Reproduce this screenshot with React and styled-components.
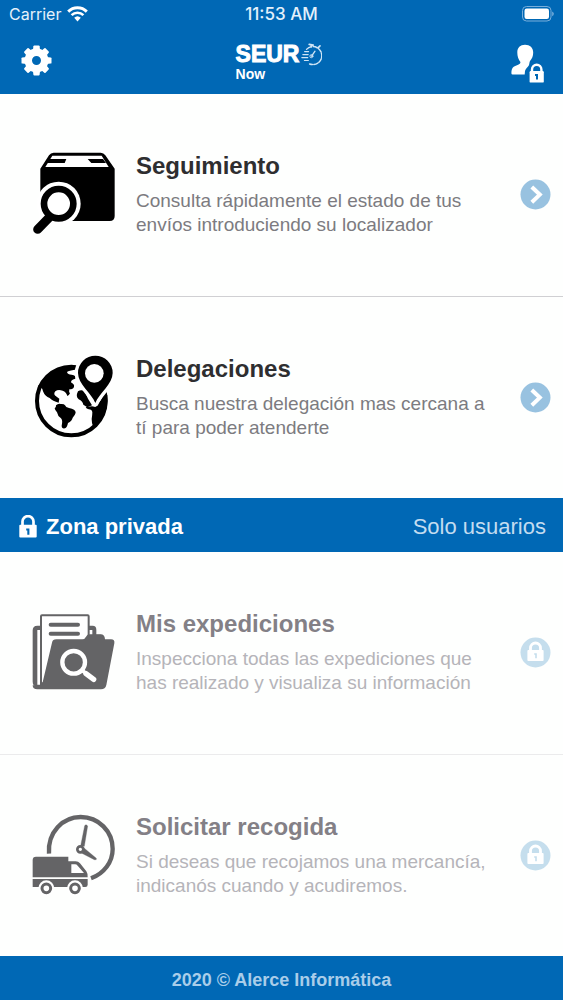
import styled, { createGlobalStyle } from "styled-components";

const GlobalStyle = createGlobalStyle`
  * {
    box-sizing: border-box;
  }

  body {
    margin: 0;
    background: #fefffe;
    font-family: "Liberation Sans", Arial, sans-serif;
  }
`;

const Screen = styled.div`
  display: flex;
  flex-direction: column;
  min-height: 100vh;
`;

const Header = styled.header`
  background: #0068b5;
  color: #fff;
`;

const StatusBar = styled.div`
  display: grid;
  grid-template-columns: 1fr auto 1fr;
  align-items: center;
  height: 28px;
  padding: 0 9px;
  font-family: Inter, sans-serif;
  font-size: 16px;
`;

const Carrier = styled.div`
  display: flex;
  align-items: center;
  gap: 6px;
  color: #e4f1fb;
`;

const Clock = styled.div`
  font-size: 17px;
  font-weight: 500;
  color: #e4f1fb;
`;

const BatteryIcon = styled.svg`
  justify-self: end;
`;

const NavBar = styled.div`
  display: grid;
  grid-template-columns: 1fr auto 1fr;
  align-items: center;
  height: 66px;
  padding: 0 18px 2px 21px;
`;

const IconButton = styled.button`
  display: flex;
  justify-self: ${({ $align }) => $align};
  padding: 0;
  border: 0;
  background: none;
  color: inherit;
  cursor: pointer;
`;

const Brand = styled.div`
  display: grid;
  grid-template-columns: auto auto;
  column-gap: 2px;
  align-items: center;
  padding: 4px 8px 0 0;
`;

const BrandName = styled.span`
  font-size: 23px;
  font-weight: 700;
  line-height: 20px;
  -webkit-text-stroke: 1px #fff;
`;

const BrandSub = styled.span`
  grid-column: 1 / -1;
  font-size: 14px;
  font-weight: 700;
  line-height: 16px;
`;

const MenuItem = styled.a`
  display: flex;
  flex: 1;
  align-items: center;
  padding: 0 12px 0 31px;
  border: 0 solid ${({ $locked }) => ($locked ? "#ebebec" : "#d0d0d3")};
  color: #2e2e30;
  text-decoration: none;

  & + & {
    border-top-width: 1px;
  }
`;

const Picture = styled.svg`
  flex: none;
  width: 85px;
  height: 85px;
  margin-right: 20px;
  color: ${({ $locked }) => ($locked ? "#646466" : "#000")};
`;

const ItemText = styled.div`
  flex: 1;
  margin-right: 28px;
`;

const ItemTitle = styled.h2`
  margin: 0 0 9px;
  font-size: 24px;
  line-height: 28px;
  color: ${({ $locked }) => ($locked ? "#838086" : "#2e2e30")};
`;

const ItemInfo = styled.p`
  margin: 0;
  font-size: 19px;
  line-height: 24px;
  color: ${({ $locked }) => ($locked ? "#b5b4b9" : "#7c7b80")};
`;

const Badge = styled.svg`
  flex: none;
  width: 31px;
  height: 31px;
`;

const ZoneBar = styled.div`
  display: flex;
  align-items: center;
  height: 54px;
  padding: 3px 17px 0 19px;
  background: #0068b5;
  color: #fff;
  font-size: 22px;
`;

const ZoneTitle = styled.h1`
  flex: 1;
  margin: 0 0 0 9px;
  font-size: inherit;
`;

const ZoneNote = styled.span`
  color: #c3dcf0;
`;

const Footer = styled.footer`
  height: 44px;
  padding-top: 4px;
  background: #0068b5;
  color: #a9cde9;
  font-size: 18px;
  font-weight: 700;
  line-height: 40px;
  text-align: center;
`;

function WifiIcon() {
  return (
    <svg width="21" height="16" viewBox="0 0 21 16" fill="none" stroke="#fff">
      <path d="M1.2 5.6a13.2 13.2 0 0 1 18.6 0" strokeWidth="2.9" />
      <path d="M4.6 9.1a8.4 8.4 0 0 1 11.8 0" strokeWidth="2.6" />
      <path d="M7.2 11.8a4.8 4.8 0 0 1 6.6 0l-3.3 3.6z" fill="#fff" stroke="none" />
    </svg>
  );
}

function Battery() {
  return (
    <BatteryIcon width="33" height="16" viewBox="0 0 33 16">
      <rect x="1.5" y="0.5" width="28.5" height="14.5" rx="4" fill="none" stroke="#78aedb" />
      <rect x="3.5" y="2.5" width="24.5" height="10.5" rx="2.2" fill="#fff" />
      <path d="M31.2 5.4q1.6 .7 1.6 2.4t-1.6 2.4z" fill="#78aedb" />
    </BatteryIcon>
  );
}

function GearIcon() {
  const teeth = [0, 45, 90, 135, 180, 225, 270, 315];
  return (
    <svg width="31" height="31" viewBox="0 0 31 31">
      <g fill="#fff">
        {teeth.map((angle) => (
          <path
            key={angle}
            d="M11.9 5.5l.5-4.2q.1-.8.9-.8h4.4q.8 0 .9.8l.5 4.2z"
            transform={`rotate(${angle} 15.5 15.5)`}
          />
        ))}
      </g>
      <circle cx="15.5" cy="15.5" r="8.2" fill="none" stroke="#fff" strokeWidth="7.4" />
    </svg>
  );
}

function StopwatchIcon() {
  return (
    <svg width="21" height="23" viewBox="0 0 21 23" fill="none" stroke="#cfe5f6" strokeLinecap="round">
      <path d="M5.5 6.4A9 9 0 0 1 10.5 3.6" strokeWidth="1.3" />
      <path d="M12.2 3.6A9 9 0 1 1 8.6 21" strokeWidth="1.5" strokeDasharray="4.2 1.4" />
      <path d="M8.2 1.3l4 .8M10.2 1.8v2M17.2 4.6l1.8-1.8" strokeWidth="1.7" />
      <path d="M3.6 8.6h4M1.8 11.6h5.4M.8 14.6h6M3.4 17.5h4" strokeWidth="1.1" />
      <path d="M10.6 13.2L14 8.2" strokeWidth="1.3" />
      <circle cx="10.4" cy="13.2" r="1.5" strokeWidth="1" />
    </svg>
  );
}

function UserLockIcon() {
  return (
    <svg width="34" height="47" viewBox="0 -7 34 47" fill="none">
      <path
        d="M14 .8c5 0 8.2 3 8.2 7.8 0 3.5-1.2 6.1-3 8.2-1 1.2-.6 3-1.4 4.6-1 1.7-3.3 3.3-3.8 5.6l-.3 3.6H1.6q-1.2 0-1.2-1.4c0-5.6 2.2-6.9 5.6-8 2.6-.9 3.6-1.7 3.4-3.2C7.4 15.5 6.3 12.6 6.3 8.6 6.3 3.8 9.2.8 14 .8z"
        fill="#fff"
      />
      <path d="M21 28v-2.6a4.7 4.7 0 0 1 9.4 0V28" stroke="#fff" strokeWidth="2.4" />
      <rect x="18.6" y="27" width="14.2" height="11.6" rx="1.2" fill="#fff" />
      <path d="M24 30h3v5.6h-2v-3.6h-1z" fill="#0068b5" />
    </svg>
  );
}

function LockIcon() {
  return (
    <svg width="18" height="23" viewBox="0 0 18 23" fill="none">
      <path d="M3.5 11V6.6a5.5 5.5 0 0 1 11 0V11" stroke="#fff" strokeWidth="2.7" />
      <rect x="0.3" y="9.8" width="17.4" height="12.8" rx="1" fill="#fff" />
      <path d="M7.2 13.5h3.2v6.2H8.3v-4.3H7.2z" fill="#0068b5" />
    </svg>
  );
}

function ParcelPicture() {
  return (
    <Picture viewBox="33 36 255 255">
      <path
        d="M61 86L87 46q5-8 14-8h141q9 0 14 8l28 40v142q0 15-15 15H76q-15 0-15-15z"
        fill="currentColor"
      />
      <path d="M97 47h148l21 34H76z" fill="#fff" />
      <path d="M86 57h53l-5 12H80zM203 57h46l9 12h-44z" fill="currentColor" />
      <circle cx="116" cy="191" r="66" fill="#fff" />
      <path d="M56 192h60l40 51-4 14H56z" fill="#fff" />
      <circle cx="116" cy="191" r="44" fill="none" stroke="currentColor" strokeWidth="20" />
      <path d="M88 232L53 268" stroke="currentColor" strokeWidth="27" strokeLinecap="round" />
    </Picture>
  );
}

function GlobePicture() {
  return (
    <Picture viewBox="33 42 255 255">
      <circle cx="154" cy="180" r="103" fill="#fff" stroke="currentColor" strokeWidth="12" />
      <g fill="currentColor">
        <path d="M54 143C70 103 108 74 165 74v12q-18 2-24 7 2 8 14 8 14 2 11 12-16 4-12 12 10 4 8 12-2 8-14 8-2 8 2 12-4 8-8 8-3-12-14-16-14-5-22 2-8 10 4 16l8 6-2 12q-18-4-27-14-14-4-20-20-3-14-15-18z" />
        <path d="M108 193q6-6 14-4 10-1 13 4 3 8 12 8 20 4 20 14-2 8-9 15-2 10-14 16-3 14-9 16-10 2-10-8 4-16-2-22-10-6-12-18-6-6-7-12 5-3 4-9z" />
        <path d="M174 151q10-6 20 0l10 22 12 20-14 6-12-8q-2-10-14-16-10-8-2-24z" />
        <path d="M262 162c5 46-15 80-43 94q-4-10-4-22 2-12 2-20-1-9-11-9-7-1-9-7l19-2 10 2 16-20 7-14z" />
      </g>
      <path
        d="M226 186c-12-30-52-57-52-90a52 52 0 0 1 104 0c0 33-40 60-52 90z"
        fill="currentColor"
        stroke="#fff"
        strokeWidth="20"
        strokeLinejoin="round"
        paintOrder="stroke"
      />
      <circle cx="223" cy="97" r="28" fill="#fff" />
    </Picture>
  );
}

function FolderPicture() {
  return (
    <Picture viewBox="33 31 255 255" $locked>
      <path d="M38 92q0-14 14-14h166q11 0 11 12v15h12q10 0 12 14l-9 141H52q-14 0-14-14z" fill="currentColor" />
      <path d="M52 91h8v164h-8zM207 91h10v15l-10 4z" fill="#fff" />
      <path d="M63 250V50q0-3 3-3h137q3 0 3 3v82l-40 124z" fill="#fff" stroke="currentColor" strokeWidth="6" />
      <path d="M92 75h82M92 102h82" stroke="currentColor" strokeWidth="12" strokeLinecap="round" />
      <path
        d="M96 129q2-10 13-10h78q7 0 11-8t13-7h31q12 0 13 15h18q12 0 10 12l-24 125q-3 13-16 13H52q-14 0-14-12l28-1z"
        fill="currentColor"
      />
      <circle cx="161" cy="188" r="34" fill="none" stroke="#fff" strokeWidth="13" />
      <path d="M185 211l10 8" stroke="#fff" strokeWidth="11" />
      <path d="M198 222l23 17" stroke="#fff" strokeWidth="16" strokeLinecap="round" />
    </Picture>
  );
}

function TruckPicture() {
  return (
    <Picture viewBox="33 39 255 255" $locked>
      <path
        d="M87 161C82 96 129 51 182 51c54 0 96 43 96 96 0 39-26 74-65 88"
        fill="none"
        stroke="currentColor"
        strokeWidth="13"
      />
      <path d="M182 137l12-60q4-6 9 1l-10 61zM191 143l38 32q2 6-6 4l-39-20z" fill="currentColor" stroke="currentColor" strokeLinejoin="round" />
      <circle cx="181" cy="148" r="9" fill="#fff" stroke="currentColor" strokeWidth="8" />
      <path d="M38 180q0-10 10-10h97v14h22q8 0 13 6l19 24q4 5 4 18H38z" fill="currentColor" />
      <path d="M154 193h11q5 0 8 4l19 22h-38z" fill="#fff" />
      <path d="M38 237h165v17q0 7-7 7H38z" fill="currentColor" />
      <circle cx="79" cy="265" r="24" fill="#fff" />
      <circle cx="165" cy="265" r="24" fill="#fff" />
      <circle cx="79" cy="265" r="13" fill="none" stroke="currentColor" strokeWidth="9" />
      <circle cx="165" cy="265" r="13" fill="none" stroke="currentColor" strokeWidth="9" />
    </Picture>
  );
}

function ArrowBadge() {
  return (
    <Badge viewBox="0 0 31 31" fill="none">
      <circle cx="15.5" cy="15.5" r="15" fill="#98c2e0" />
      <path d="M11.8 8l8 7.6-8 7.6" stroke="#fff" strokeWidth="4" />
    </Badge>
  );
}

function LockBadge() {
  return (
    <Badge viewBox="0 0 31 31" fill="none">
      <circle cx="15.5" cy="15.5" r="15" fill="#c5deed" />
      <path d="M10.5 14v-3a5 5 0 0 1 10 0v3" stroke="#fff" strokeWidth="2.8" />
      <rect x="7.4" y="13" width="16.2" height="11" rx="1" fill="#fff" />
      <path d="M14.2 16.2h2.6v5h-1.6v-3.4h-1z" fill="#c5deed" />
    </Badge>
  );
}

const publicItems = [
  {
    id: "seguimiento",
    title: "Seguimiento",
    info: "Consulta rápidamente el estado de tus envíos introduciendo su localizador",
    Icon: ParcelPicture,
  },
  {
    id: "delegaciones",
    title: "Delegaciones",
    info: "Busca nuestra delegación mas cercana a tí para poder atenderte",
    Icon: GlobePicture,
  },
];

const privateItems = [
  {
    id: "expediciones",
    title: "Mis expediciones",
    info: "Inspecciona todas las expediciones que has realizado y visualiza su información",
    Icon: FolderPicture,
  },
  {
    id: "recogida",
    title: "Solicitar recogida",
    info: "Si deseas que recojamos una mercancía, indicanós cuando y acudiremos.",
    Icon: TruckPicture,
  },
];

function MenuRow({ item, locked = false }) {
  const { id, title, info, Icon } = item;
  return (
    <MenuItem href={`#${id}`} $locked={locked}>
      <Icon />
      <ItemText>
        <ItemTitle $locked={locked}>{title}</ItemTitle>
        <ItemInfo $locked={locked}>{info}</ItemInfo>
      </ItemText>
      {locked ? <LockBadge /> : <ArrowBadge />}
    </MenuItem>
  );
}

export default function App() {
  return (
    <Screen>
      <GlobalStyle />
      <Header>
        <StatusBar>
          <Carrier>
            Carrier
            <WifiIcon />
          </Carrier>
          <Clock>11:53 AM</Clock>
          <Battery />
        </StatusBar>
        <NavBar>
          <IconButton type="button" aria-label="Ajustes" $align="start">
            <GearIcon />
          </IconButton>
          <Brand>
            <BrandName>SEUR</BrandName>
            <StopwatchIcon />
            <BrandSub>Now</BrandSub>
          </Brand>
          <IconButton type="button" aria-label="Acceso" $align="end">
            <UserLockIcon />
          </IconButton>
        </NavBar>
      </Header>

      {publicItems.map((item) => (
        <MenuRow key={item.id} item={item} />
      ))}

      <ZoneBar>
        <LockIcon />
        <ZoneTitle>Zona privada</ZoneTitle>
        <ZoneNote>Solo usuarios</ZoneNote>
      </ZoneBar>

      {privateItems.map((item) => (
        <MenuRow key={item.id} item={item} locked />
      ))}

      <Footer>2020 © Alerce Informática</Footer>
    </Screen>
  );
}
